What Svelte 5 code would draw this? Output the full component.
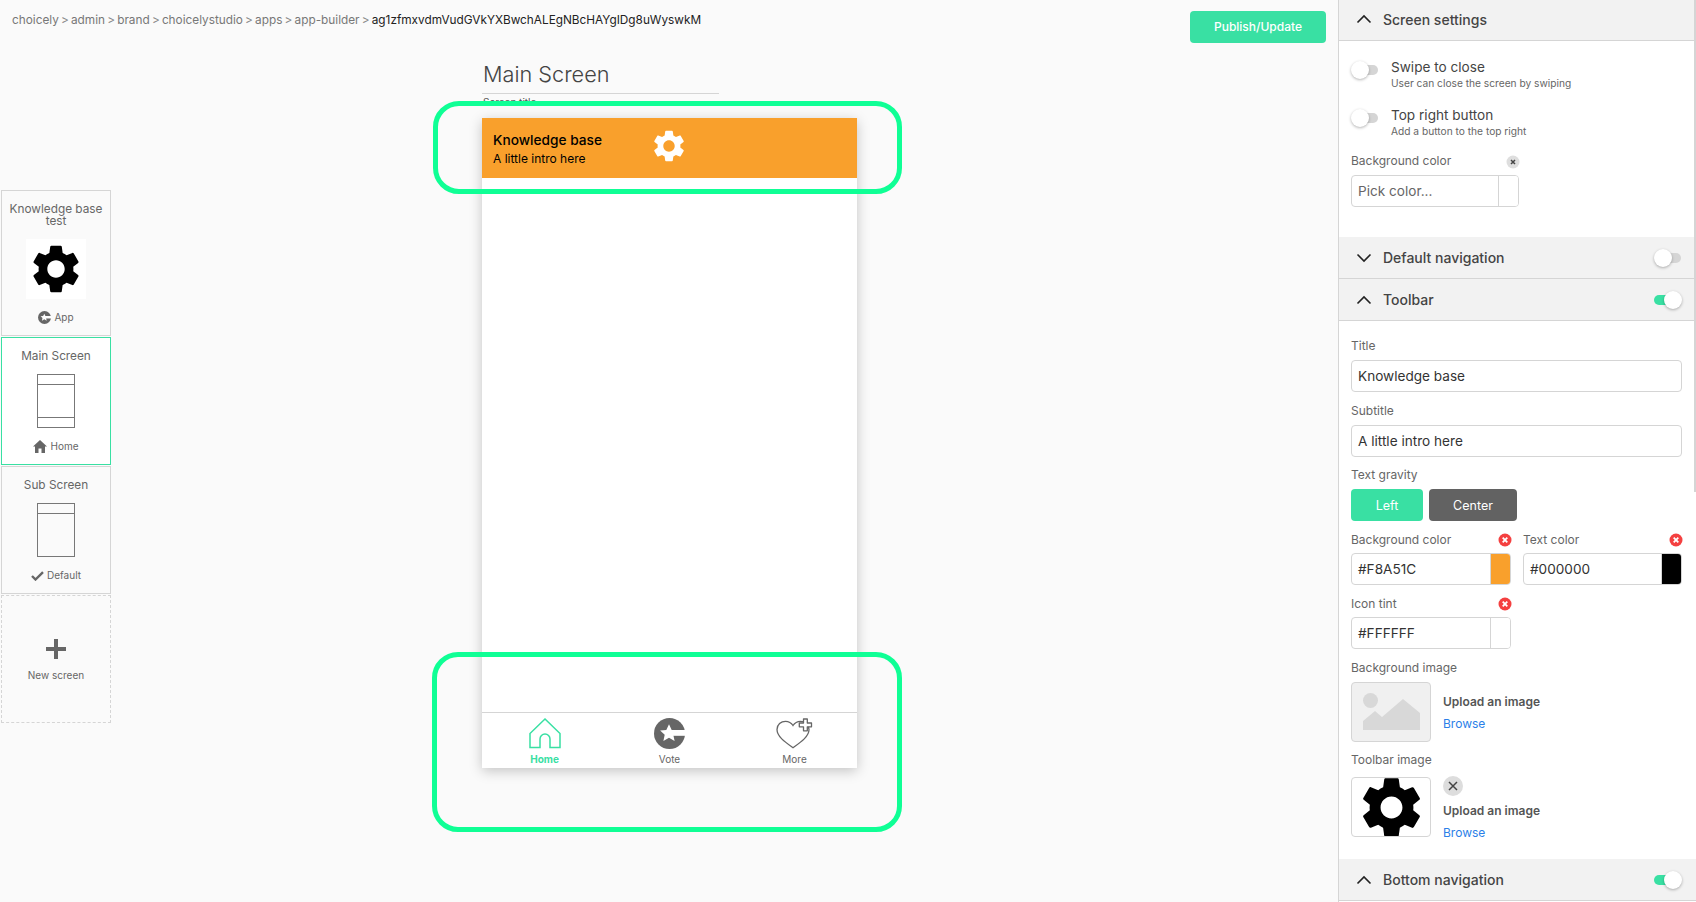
<script>
  const crumbs = ['choicely', 'admin', 'brand', 'choicelystudio', 'apps', 'app-builder'];
  const gear = 'M19.14,12.94c0.04-0.3,0.06-0.61,0.06-0.94c0-0.32-0.02-0.64-0.07-0.94l2.03-1.58c0.18-0.14,0.23-0.41,0.12-0.61l-1.92-3.32c-0.12-0.22-0.37-0.29-0.59-0.22l-2.39,0.96c-0.5-0.38-1.03-0.7-1.62-0.94L14.4,2.81c-0.04-0.24-0.24-0.41-0.48-0.41h-3.84c-0.24,0-0.43,0.17-0.47,0.41L9.25,5.35C8.66,5.59,8.12,5.92,7.63,6.29L5.24,5.33c-0.22-0.08-0.47,0-0.59,0.22L2.74,8.87C2.62,9.08,2.66,9.34,2.86,9.48l2.03,1.58C4.84,11.36,4.8,11.69,4.8,12s0.02,0.64,0.07,0.94l-2.03,1.58c-0.18,0.14-0.23,0.41-0.12,0.61l1.92,3.32c0.12,0.22,0.37,0.29,0.59,0.22l2.39-0.96c0.5,0.38,1.03,0.7,1.62,0.94l0.36,2.54c0.05,0.24,0.24,0.41,0.48,0.41h3.84c0.24,0,0.44-0.17,0.47-0.41l0.36-2.54c0.59-0.24,1.13-0.56,1.62-0.94l2.39,0.96c0.22,0.08,0.47,0,0.59-0.22l1.92-3.32c0.12-0.22,0.07-0.47-0.12-0.61L19.14,12.94z M12,15.6c-1.98,0-3.6-1.62-3.6-3.6s1.62-3.6,3.6-3.6s3.6,1.62,3.6,3.6S13.98,15.6,12,15.6z';
</script>

{#snippet gearIcon(size, color)}
  <svg width={size} height={size} viewBox="0 0 24 24" class="noshrink"><path d={gear} fill={color} fill-rule="evenodd" /></svg>
{/snippet}

{#snippet vote(size)}
  <svg width={size} height={size} viewBox="0 0 31 31" class="noshrink">
    <circle cx="15.500" cy="15.500" r="15.500" fill="#666" />
    <rect x="18" y="12" width="14" height="5.800" fill="#fff" />
    <path d="M15 6.300l2.700 5.700 6.200.6-4.600 4.200 1.300 6.200-5.600-3.200-5.600 3.200 1.300-6.200-4.600-4.200 6.200-.6z" fill="#fff" />
  </svg>
{/snippet}

{#snippet chevron(open)}
  <svg class="chev" width="16" height="10" viewBox="0 0 16 10">
    <path d={open ? 'M1.500 8.500L8 2l6.500 6.500' : 'M1.500 1.500L8 8l6.500-6.500'} fill="none" stroke="#222" stroke-width="1.600" />
  </svg>
{/snippet}

{#snippet toggle(on)}
  <span class="toggle" class:on><span class="track"></span><span class="knob"></span></span>
{/snippet}

{#snippet sectionHead(title, open, sw)}
  <div class="head">
    {@render chevron(open)}
    <span class="head-title">{title}</span>
    {#if sw !== undefined}{@render toggle(sw)}{/if}
  </div>
{/snippet}

{#snippet colorField(label, value, swatch, clear)}
  <div class="color-field">
    <div class="label-row">
      <span class="label">{label}</span>
      {#if clear === 'red'}
        <svg class="clear-mark" width="14" height="14" viewBox="0 0 14 14"><circle cx="7" cy="7" r="6.500" fill="#f44040" /><path d="M4.700 4.700l4.600 4.600M9.300 4.700l-4.600 4.600" stroke="#fff" stroke-width="1.800" /></svg>
      {:else}
        <svg class="clear-mark" width="14" height="14" viewBox="0 0 14 14"><circle cx="7" cy="7" r="6.500" fill="#dedede" /><path d="M5 5l4 4M9 5l-4 4" stroke="#444" stroke-width="1.500" /></svg>
      {/if}
    </div>
    <div class="input color-input">
      <span class="color-value" class:placeholder={!value}>{value || 'Pick color...'}</span>
      <span class="swatch" style:background={swatch}></span>
    </div>
  </div>
{/snippet}

<div class="page">
  <main class="main">
    <header class="topbar">
      <nav class="crumbs">
        {#each crumbs as c}
          <span>{c}</span><span class="sep">&gt;</span>
        {/each}
        <span class="current">ag1zfmxvdmVudGVkYXBwchALEgNBcHAYgIDg8uWyswkM</span>
      </nav>
      <button class="publish">Publish/Update</button>
    </header>

    <div class="stage">
      <aside class="rail">
        <div class="card first">
          <div class="card-title">Knowledge base test</div>
          <div class="thumb">{@render gearIcon(58, '#000')}</div>
          <div class="card-foot">{@render vote(13)}<span>App</span></div>
        </div>
        <div class="card active">
          <div class="card-title">Main Screen</div>
          <div class="wire">
            <div class="bar-top"></div>
            <div class="wire-body"></div>
            <div class="bar-bottom"></div>
          </div>
          <div class="card-foot">
            <svg width="14" height="13" viewBox="0 0 14 13"><path d="M7 0L0 6.500h2V13h3.500V8.500h3V13H12V6.500h2z" fill="#666" /></svg>
            <span>Home</span>
          </div>
        </div>
        <div class="card">
          <div class="card-title">Sub Screen</div>
          <div class="wire">
            <div class="bar-top"></div>
            <div class="wire-body"></div>
          </div>
          <div class="card-foot">
            <svg width="13" height="10" viewBox="0 0 13 10"><path d="M1 5l3.500 3.500L12 1.200" fill="none" stroke="#666" stroke-width="2.400" /></svg>
            <span>Default</span>
          </div>
        </div>
        <div class="card new">
          <svg width="20" height="20" viewBox="0 0 20 20"><path d="M8 0h4v8h8v4h-8v8H8v-8H0V8h8z" fill="#666" /></svg>
          <span>New screen</span>
        </div>
      </aside>

      <section class="editor">
        <div class="screen-title">Main Screen</div>
        <div class="screen-caption">Screen title</div>
        <div class="phone">
          <div class="toolbar">
            <div class="toolbar-text">
              <div class="tb-title">Knowledge base</div>
              <div class="tb-sub">A little intro here</div>
            </div>
            <div class="tb-icon">{@render gearIcon(38, '#fff')}</div>
          </div>
          <div class="phone-body"></div>
          <div class="tabs">
            <div class="tab active">
              <svg width="32" height="31" viewBox="0 0 32 31"><path d="M16 1L1 15.500V29.500H11V21a5 5 0 0 1 10 0V29.500H31V15.500z" fill="none" stroke="#39e0a3" stroke-width="1.500" /></svg>
              <span>Home</span>
            </div>
            <div class="tab">
              {@render vote(31)}
              <span>Vote</span>
            </div>
            <div class="tab">
              <svg width="37" height="31" viewBox="0 0 37 31">
                <path d="M17 29.700C9 24 1 18.500 1 11.500 1 6.500 5 3.300 9.500 3.300c3 0 5.800 1.500 7.500 4.200 1.700-2.700 4.500-4.200 7.500-4.200 4.500 0 8.500 3.200 8.500 8.200 0 7-8 12.500-16 18.200z" fill="#fff" stroke="#666" stroke-width="1.300" />
                <path d="M27.500 1h3.800v4h4.200v3.800h-4.200v4h-3.800v-4h-4.200V5h4.200z" fill="#fff" stroke="#666" stroke-width="1.300" stroke-linejoin="round" />
              </svg>
              <span>More</span>
            </div>
          </div>
        </div>
      </section>
    </div>

    <div class="highlight hl-top"></div>
    <div class="highlight hl-bottom"></div>
  </main>

  <aside class="panel">
    {@render sectionHead('Screen settings', true)}
    <div class="body settings">
      <div class="switch-row">
        {@render toggle(false)}
        <div><div class="sw-title">Swipe to close</div><div class="sw-sub">User can close the screen by swiping</div></div>
      </div>
      <div class="switch-row">
        {@render toggle(false)}
        <div><div class="sw-title">Top right button</div><div class="sw-sub">Add a button to the top right</div></div>
      </div>
      <div class="narrow">{@render colorField('Background color', '', '#fff', 'gray')}</div>
    </div>
    {@render sectionHead('Default navigation', false, false)}
    {@render sectionHead('Toolbar', true, true)}
    <div class="body toolbar-form">
      <div class="field">
        <span class="label">Title</span>
        <div class="input">Knowledge base</div>
      </div>
      <div class="field tight">
        <span class="label">Subtitle</span>
        <div class="input">A little intro here</div>
      </div>
      <div class="field gravity">
        <span class="label">Text gravity</span>
        <div class="btns"><button class="btn left">Left</button><button class="btn center">Center</button></div>
      </div>
      <div class="color-grid">
        {@render colorField('Background color', '#F8A51C', '#f9a02c', 'red')}
        {@render colorField('Text color', '#000000', '#000', 'red')}
        {@render colorField('Icon tint', '#FFFFFF', '#fff', 'red')}
      </div>
      <div class="field image-field">
        <span class="label">Background image</span>
        <div class="upload">
          <div class="img-box placeholder-box">
            <svg width="78" height="58" viewBox="0 0 78 58"><circle cx="18.500" cy="17.500" r="7.500" fill="#d8d8d8" /><path d="M11 38L23 28l7 6L51 16l17 14v17H11z" fill="#d8d8d8" /></svg>
          </div>
          <div class="upload-text"><b>Upload an image</b><a href="#top">Browse</a></div>
        </div>
      </div>
      <div class="field image-field second">
        <span class="label">Toolbar image</span>
        <div class="upload">
          <div class="img-box">{@render gearIcon(73, '#000')}</div>
          <div class="upload-text with-clear">
            <span class="clear">
              <svg width="20" height="20" viewBox="0 0 20 20"><circle cx="10" cy="10" r="10" fill="#ddd" /><path d="M6 6l8 8M14 6l-8 8" stroke="#444" stroke-width="1.500" /></svg>
            </span>
            <b>Upload an image</b><a href="#top">Browse</a>
          </div>
        </div>
      </div>
    </div>
    {@render sectionHead('Bottom navigation', true, true)}
    <div class="scrollbar"></div>
  </aside>
</div>

<style>
  :global(body) { margin: 0; background: #fafafa; font-family: Inter, "Liberation Sans", sans-serif; color: #333; }
  .page { display: flex; width: 1696px; height: 902px; overflow: hidden; }
  .noshrink { flex: none; display: block; }

  .main { position: relative; width: 1338px; flex: none; }
  .topbar { display: flex; justify-content: space-between; align-items: flex-start; padding: 11px 12px 0; height: 32px; }
  .crumbs { display: flex; gap: 2.200px; font-size: 11.800px; line-height: 18px; color: #777; white-space: nowrap; }
  .sep { color: #888; }
  .current { color: #222; }
  .publish { width: 136px; height: 32px; border: 0; border-radius: 4px; background: #39e0a3; color: #fff; font: 500 12px Inter, sans-serif; padding: 0 0 2px; }

  .stage { display: flex; align-items: flex-start; }
  .rail { width: 110px; margin: 147px 0 0 1px; display: flex; flex-direction: column; gap: 1px; }
  .card { box-sizing: border-box; height: 128px; border: 1px solid #d5d5d5; display: flex; flex-direction: column; align-items: center; color: #666; padding-top: 12px; }
  .card.first { height: 146px; padding-top: 12px; }
  .card.active { background: #fff; border-color: #39e0a3; }
  .card-title { font-size: 11.800px; line-height: 12px; text-align: center; width: 100px; height: 12px; }
  .first .card-title { height: 24px; }
  .thumb { width: 60px; height: 60px; margin: 12px 0 11px; background: #fff; display: flex; align-items: center; justify-content: center; }
  .card-foot { display: flex; align-items: center; gap: 3px; font-size: 10px; line-height: 13px; margin-top: auto; padding-bottom: 11px; }
  .wire { box-sizing: border-box; width: 38px; height: 54px; margin-top: 12px; border: 1px solid #777; display: flex; flex-direction: column; }
  .bar-top { height: 9px; border-bottom: 1px solid #777; }
  .wire-body { flex: 1; }
  .bar-bottom { height: 9px; border-top: 1px solid #777; }
  .card.new { border-style: dashed; justify-content: flex-start; padding-top: 43px; gap: 10px; font-size: 10px; line-height: 12px; }

  .editor { margin-left: 371px; width: 375px; padding-top: 16px; }
  .screen-title { box-sizing: border-box; width: 237px; height: 35px; padding: 0 0 0 1px; font-size: 21.700px; line-height: 30px; font-weight: 300; color: #444; border-bottom: 1px solid #d5d5d5; }
  .screen-caption { font-size: 10px; line-height: 12px; height: 22px; margin-top: 2px; color: #555; padding-left: 1px; }
  .phone { height: 650px; background: #fff; box-shadow: 0 3px 12px rgba(0,0,0,.22); display: flex; flex-direction: column; }
  .toolbar { height: 60px; background: #f9a02c; display: flex; align-items: center; position: relative; padding-left: 11px; color: #000; }
  .toolbar-text { padding-top: 2px; }
  .tb-title { font-size: 13.700px; font-weight: 500; line-height: 18px; }
  .tb-sub { font-size: 12px; line-height: 19px; }
  .tb-icon { position: absolute; left: 168px; top: 9px; }
  .phone-body { flex: 1; }
  .tabs { height: 55px; border-top: 1px solid #d5d5d5; display: grid; grid-template-columns: repeat(3, 1fr); }
  .tab { display: flex; flex-direction: column; align-items: center; padding-top: 5px; font-size: 10px; line-height: 12px; color: #666; gap: 4px; }
  .tab.active { color: #39e0a3; font-weight: 700; }

  .highlight { position: absolute; box-sizing: border-box; border: 5px solid #0fff95; border-radius: 26px; pointer-events: none; }
  .hl-top { left: 433px; top: 101px; width: 469px; height: 93px; }
  .hl-bottom { left: 432px; top: 652px; width: 470px; height: 180px; }

  .panel { position: relative; box-sizing: border-box; width: 358px; border-left: 1px solid #d5d5d5; background: #fff; }
  .scrollbar { position: absolute; right: 0; top: 0; width: 2px; height: 492px; background: #d5d5d5; }
  .head { box-sizing: border-box; height: 42px; background: #f2f2f2; border-bottom: 1px solid #d5d5d5; display: flex; align-items: center; padding: 0 12px 0 17px; }
  .head:first-child { height: 41px; padding-bottom: 2px; }
  .chev { flex: none; }
  .head-title { margin-left: 11px; flex: 1; font-size: 14px; font-weight: 500; color: #444; }
  .toggle { position: relative; display: block; width: 30px; height: 18px; flex: none; }
  .track { position: absolute; left: 3px; right: 3px; top: 4px; height: 10px; border-radius: 5px; background: #d5d5d5; }
  .knob { position: absolute; left: 0; top: 0; width: 18px; height: 18px; border-radius: 50%; background: #fff; box-shadow: 0 1px 3px rgba(0,0,0,.3); }
  .toggle.on .track { background: #39e0a3; left: 0; right: 6px; }
  .toggle.on .knob { left: 10px; }

  .body { padding: 0 12px; }
  .settings { box-sizing: border-box; height: 196px; padding-top: 17px; }
  .switch-row { display: flex; gap: 10px; height: 48px; align-items: flex-start; }
  .switch-row .toggle { margin-top: 3px; }
  .sw-title { font-size: 13.600px; line-height: 18px; color: #444; }
  .sw-sub { font-size: 10.200px; line-height: 15px; color: #666; }
  .narrow { width: 168px; }
  .narrow .label-row { margin-bottom: 7px; }
  .narrow .clear-mark { margin-top: 2px; }
  .label { font-size: 12px; line-height: 14px; color: #666; display: block; }
  .input { box-sizing: border-box; height: 32px; border: 1px solid #d5d5d5; border-radius: 4px; background: #fff; font-size: 13.600px; line-height: 30px; padding-left: 6px; color: #333; }
  .field { display: flex; flex-direction: column; gap: 7px; margin-bottom: 12px; }
  .field.tight { margin-bottom: 11px; }
  .toolbar-form { box-sizing: border-box; width: 355px; height: 538px; padding-top: 18px; }
  .gravity { gap: 7px; margin-bottom: 12px; }
  .btns { display: flex; gap: 6px; }
  .btn { height: 32px; border: 0; border-radius: 4px; color: #fff; font: 400 12.500px Inter, sans-serif; padding: 0; }
  .btn.left { width: 72px; background: #39e0a3; }
  .btn.center { width: 88px; background: #626262; }
  .color-grid { display: grid; grid-template-columns: 160px 159px; column-gap: 12px; row-gap: 12px; margin-bottom: 12px; }
  .label-row { display: flex; justify-content: space-between; align-items: center; height: 14px; margin-bottom: 6px; }
  .clear-mark { margin-right: -1px; }
  .color-input { display: flex; justify-content: space-between; padding: 0 0 0 6px; overflow: hidden; }
  .swatch { width: 19px; border-left: 1px solid #d5d5d5; }
  .placeholder { color: #666; }
  .image-field { gap: 7px; margin-bottom: 11px; }
  .image-field.second { gap: 10px; margin-bottom: 0; }
  .upload { display: flex; gap: 12px; height: 60px; }
  .img-box { box-sizing: border-box; width: 80px; height: 60px; border: 1px solid #d5d5d5; border-radius: 4px; background: #fff; overflow: hidden; display: flex; align-items: center; justify-content: center; }
  .placeholder-box { background: #f0f0f0; }
  .upload-text { display: flex; flex-direction: column; align-items: flex-start; padding-top: 14px; font-size: 12px; line-height: 12px; }
  .upload-text.with-clear { padding-top: 0; }
  .upload-text b { font-weight: 600; color: #555; margin-bottom: 10px; }
  .upload-text a { color: #2b7fe8; text-decoration: none; }
  .clear { display: block; height: 20px; margin: -1px 0 9px; }
</style>
